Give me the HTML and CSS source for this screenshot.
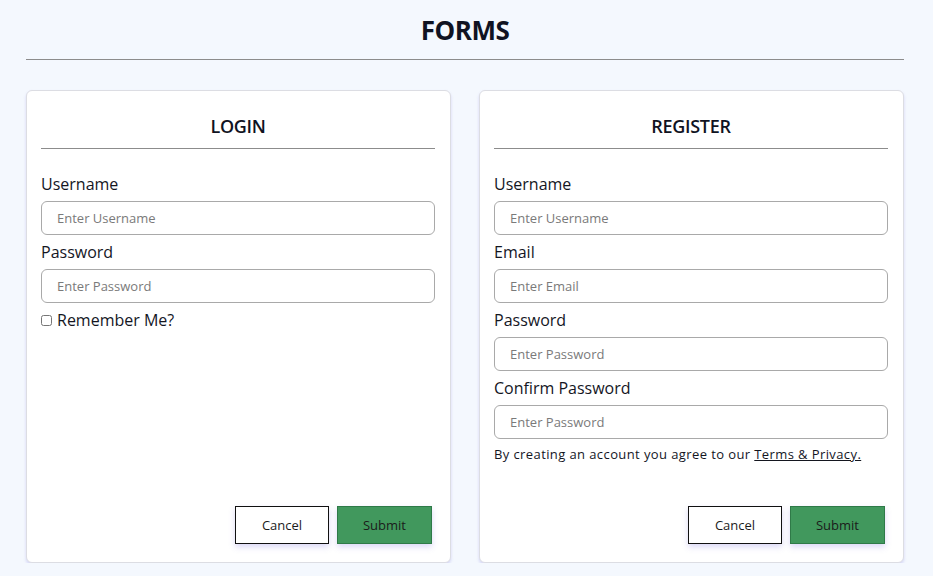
FILE: index.html
```html
<!DOCTYPE html>
<html lang="en">
<head>
<meta charset="utf-8">
<title>Forms</title>
<link rel="stylesheet" href="styles.css">
</head>
<body>
<main class="page">
  <h1 class="page-title">FORMS</h1>
  <hr class="page-rule">
  <div class="cards">
    <form class="card">
      <h2 class="card-title">LOGIN</h2>
      <hr class="card-rule">
      <label class="label" for="lu">Username</label>
      <input class="field" id="lu" type="text" placeholder="Enter Username">
      <label class="label" for="lp">Password</label>
      <input class="field" id="lp" type="password" placeholder="Enter Password">
      <label class="check"><input type="checkbox" class="checkbox"> Remember Me?</label>
      <div class="actions">
        <button type="button" class="btn btn-cancel">Cancel</button>
        <button type="button" class="btn btn-submit">Submit</button>
      </div>
    </form>
    <form class="card">
      <h2 class="card-title">REGISTER</h2>
      <hr class="card-rule">
      <label class="label" for="ru">Username</label>
      <input class="field" id="ru" type="text" placeholder="Enter Username">
      <label class="label" for="re">Email</label>
      <input class="field" id="re" type="email" placeholder="Enter Email">
      <label class="label" for="rp">Password</label>
      <input class="field" id="rp" type="password" placeholder="Enter Password">
      <label class="label" for="rc">Confirm Password</label>
      <input class="field" id="rc" type="password" placeholder="Enter Password">
      <p class="terms">By creating an account you agree to our <a href="#" class="terms-link">Terms &amp; Privacy.</a></p>
      <div class="actions">
        <button type="button" class="btn btn-cancel">Cancel</button>
        <button type="button" class="btn btn-submit">Submit</button>
      </div>
    </form>
  </div>
</main>
</body>
</html>
```
FILE: styles.css
```css
* { box-sizing: border-box; }
html, body { margin: 0; }
body {
  background: #f4f8fe;
  font-family: "Open Sans", "DejaVu Sans", sans-serif;
  color: #14161f;
}
.page {
  padding: 12px 29px 0 26px;
}
.page-title {
  margin: 0;
  text-align: center;
  font-size: 26px;
  font-weight: 700;
  letter-spacing: -0.5px;
  line-height: 36px;
  color: #101322;
}
.page-rule {
  margin: 11px 0 30px;
  border: 0;
  border-top: 1px solid #8c8c8c;
}
.cards {
  display: grid;
  grid-template-columns: 1fr 1fr;
  gap: 28px;
}
.card {
  display: flex;
  flex-direction: column;
  height: 473px;
  background: #fff;
  border: 1px solid #dcdde3;
  border-radius: 6px;
  box-shadow: 0 2px 3px rgba(120, 110, 220, 0.25);
  padding: 20px 15px 18px 14px;
}
.card-title {
  margin: 0;
  text-align: center;
  font-size: 18px;
  font-weight: 600;
  line-height: 30px;
  letter-spacing: -0.3px;
  color: #101322;
}
.card-rule {
  margin: 7px 0 25px;
  border: 0;
  border-top: 1px solid #8c8c8c;
}
.label {
  display: block;
  font-size: 16px;
  line-height: 20px;
  margin-bottom: 7px;
}
.field {
  display: block;
  width: 100%;
  height: 34px;
  margin-bottom: 7px;
  padding: 0 15px;
  border: 1px solid #a9a9a9;
  border-radius: 6px;
  font-family: inherit;
  font-size: 13px;
  color: #222;
  background: #fff;
}
.field::placeholder { color: #7a7a7a; }
.check {
  display: flex;
  align-items: center;
  gap: 5px;
  font-size: 16px;
  line-height: 20px;
}
.checkbox {
  margin: 0;
  width: 11px;
  height: 11px;
}
.terms {
  margin: 0;
  font-size: 13px;
  line-height: 16px;
  letter-spacing: 0.4px;
}
.terms-link { color: #14161f; }
.actions {
  margin-top: auto;
  display: flex;
  justify-content: flex-end;
  gap: 8px;
  padding-right: 3px;
}
.btn {
  width: 94px;
  height: 38px;
  font-family: inherit;
  font-size: 13px;
  color: #1b1b1b;
  box-shadow: 0 3px 6px rgba(110, 100, 220, 0.25);
  cursor: pointer;
}
.btn-cancel {
  background: #fff;
  border: 1px solid #111;
}
.btn-submit {
  width: 95px;
  background: #41985d;
  border: 1px solid #2f7a48;
}
```
